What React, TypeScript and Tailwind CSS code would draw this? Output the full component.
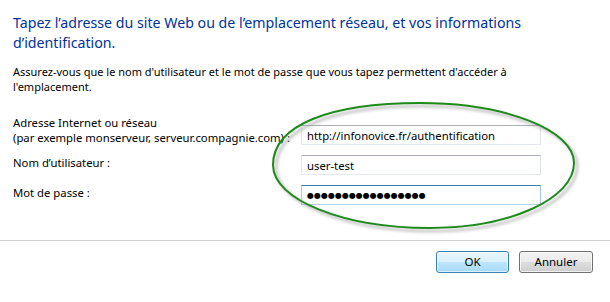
import React from "react";

const box =
  "w-[240px] h-[20px] flex items-center pl-[5px] border border-[#e3e9ef] border-t-[#abadb3] border-l-[#e2e3ea] border-r-[#dbdfe6] text-[11.3px]";

export default function App() {
  return (
    <div className="relative w-[610px] h-[302px] overflow-hidden bg-white text-[11px] leading-[15px] text-black font-['Segoe_UI','Noto_Sans',sans-serif]">
      <div className="pl-[13px] pt-[13px]">
        <h1 className="w-[548px] text-[14.2px] leading-[20px] text-[#003399] font-normal">
          Tapez l’adresse du site Web ou de l’emplacement réseau, et vos informations d’identification.
        </h1>
        <p className="mt-[11px] w-[515px]">
          Assurez-vous que le nom d'utilisateur et le mot de passe que vous tapez permettent d'accéder à l'emplacement.
        </p>

        <div className="mt-[21px] flex flex-col gap-[10px] text-[11.3px]">
          <div className="flex items-end">
            <div className="w-[288px]">
              <div>Adresse Internet ou réseau</div>
              <div>(par exemple monserveur, serveur.compagnie.com) :</div>
            </div>
            <div className={box}>http://infonovice.fr/authentification</div>
          </div>
          <div className="flex items-start">
            <div className="w-[288px]">Nom d’utilisateur :</div>
            <div className={box}>user-test</div>
          </div>
          <div className="flex items-start">
            <div className="w-[288px]">Mot de passe :</div>
            <div className="w-[240px] h-[20px] flex items-center pl-[5px] border border-[#b5cfe7] border-t-[#3d7bad] border-l-[#a4c9e3] border-r-[#a4c9e3]">
              <span className="text-[8px] font-['DejaVu_Sans',sans-serif]">●●●●●●●●●●●●●●●●●</span>
            </div>
          </div>
        </div>
      </div>

      <div className="mt-[35px] h-px bg-[#d0d0d0]" />

      <div className="mt-[10px] flex justify-end gap-[10px] pr-[17px]">
        <button className="w-[73px] h-[22px] rounded-[3px] border border-[#3c7fb1] bg-[linear-gradient(to_bottom,#eaf6fd_0%,#d9f0fc_50%,#bee6fd_51%,#a7d9f5_100%)] shadow-[inset_0_0_0_1px_rgba(255,255,255,0.6)] text-[11.5px] leading-none">
          OK
        </button>
        <button className="w-[74px] h-[22px] rounded-[3px] border border-[#707070] bg-[linear-gradient(to_bottom,#f2f2f2_0%,#ebebeb_50%,#dddddd_51%,#cfcfcf_100%)] shadow-[inset_0_0_0_1px_rgba(255,255,255,0.7)] text-[11.5px] leading-none">
          Annuler
        </button>
      </div>

      <svg className="pointer-events-none absolute left-0 top-0" width="610" height="302" viewBox="0 0 610 302">
        <defs>
          <filter id="sh" x="-10%" y="-20%" width="120%" height="140%">
            <feGaussianBlur stdDeviation="1.6" />
          </filter>
        </defs>
        <path
          d="M273 165 C273 125 330 103 420 103 C505 103 574 130 574 163 C574 199 509 228 430 228 C344 228 273 200 273 165 Z"
          transform="translate(3 3)"
          fill="none"
          stroke="#9a9a9a"
          strokeWidth="3"
          opacity="0.55"
          filter="url(#sh)"
        />
        <path
          d="M273 165 C273 125 330 103 420 103 C505 103 574 130 574 163 C574 199 509 228 430 228 C344 228 273 200 273 165 Z"
          fill="none"
          stroke="#1f8a1c"
          strokeWidth="2"
        />
      </svg>
    </div>
  );
}
